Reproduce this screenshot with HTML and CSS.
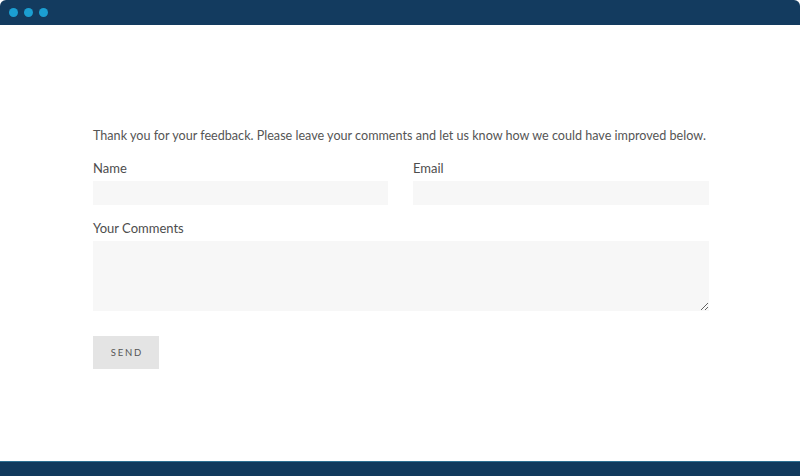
FILE: index.html
```html
<!DOCTYPE html>
<html>
<head>
<meta charset="utf-8">
<link rel="stylesheet" href="styles.css">
</head>
<body>
<div class="window">
  <div class="titlebar">
    <span class="dot"></span><span class="dot"></span><span class="dot"></span>
  </div>
  <main class="content">
    <form class="form">
      <p class="intro">Thank you for your feedback. Please leave your comments and let us know how we could have improved below.</p>
      <div class="row">
        <div class="field">
          <label class="label">Name</label>
          <input class="input" type="text">
        </div>
        <div class="field">
          <label class="label">Email</label>
          <input class="input" type="text">
        </div>
      </div>
      <div class="field comments">
        <label class="label">Your Comments</label>
        <textarea class="textarea"></textarea>
      </div>
      <button class="send" type="button">SEND</button>
    </form>
  </main>
  <div class="footer"></div>
</div>
</body>
</html>
```
FILE: styles.css
```css
* { box-sizing: border-box; }
html, body { margin: 0; padding: 0; }
body {
  width: 800px;
  height: 476px;
  overflow: hidden;
  background: #fff;
  font-family: Lato, "Open Sans", sans-serif;
  color: #555;
}
.window {
  display: flex;
  flex-direction: column;
  height: 476px;
}
.titlebar {
  height: 25px;
  background: #133b5f;
  border-radius: 6px 6px 0 0;
  display: flex;
  align-items: center;
  gap: 6px;
  padding: 0 0 0 9px;
  flex: none;
}
.dot {
  width: 9px;
  height: 9px;
  border-radius: 50%;
  background: #1b9fd2;
}
.content {
  flex: 1;
  padding: 0 91px 0 93px;
}
.form {
  width: 616px;
  display: flex;
  flex-direction: column;
}
.intro {
  margin: 102px 0 0;
  font-size: 12.6px;
  line-height: 18px;
  white-space: nowrap;
  color: #555;
}
.row {
  display: grid;
  grid-template-columns: 295px 296px;
  column-gap: 25px;
  margin-top: 14px;
}
.field {
  display: flex;
  flex-direction: column;
}
.label {
  font-size: 13px;
  line-height: 18px;
  color: #4d4d4d;
  margin-bottom: 4px;
}
.input {
  height: 24px;
  border: none;
  background: #f7f7f7;
  margin: 0;
  padding: 0;
}
.comments {
  margin-top: 14px;
}
.textarea {
  height: 70px;
  border: none;
  background: #f7f7f7;
  margin: 0;
  padding: 0;
  resize: both;
}
.send {
  margin-top: 25px;
  width: 66px;
  height: 33px;
  border: none;
  background: #e4e4e4;
  color: #555;
  font-family: Lato, sans-serif;
  font-size: 9.5px;
  letter-spacing: 1.8px;
  padding: 0 0 0 2px;
}
.footer {
  height: 15px;
  flex: none;
  background: #113a5d;
  border-top: 1px solid #2d7092;
}
```
